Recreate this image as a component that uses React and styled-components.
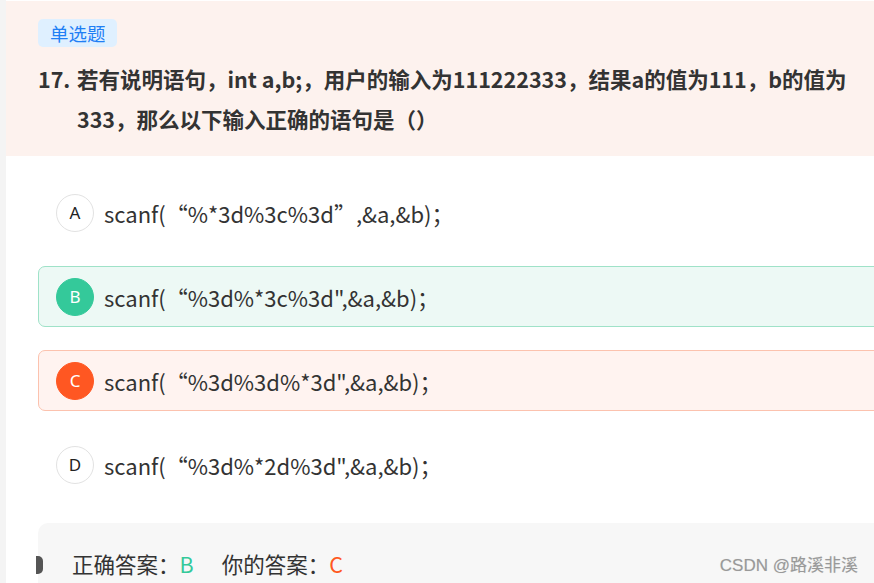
import React from 'react';
import styled, { createGlobalStyle } from 'styled-components';

const GlobalStyle = createGlobalStyle`
  html, body {
    margin: 0;
    padding: 0;
    background: #f4f4f4;
    overflow: hidden;
  }
  body {
    font-family: "Noto Sans CJK SC", "Noto Sans", sans-serif;
    color: #333;
  }
`;

const options = [
  { key: 'A', fmt: '%*3d%3c%3d”', rest: ',&a,&b)；', state: 'plain' },
  { key: 'B', fmt: '%3d%*3c%3d"', rest: ',&a,&b)；', state: 'right' },
  { key: 'C', fmt: '%3d%3d%*3d"', rest: ',&a,&b)；', state: 'wrong' },
  { key: 'D', fmt: '%3d%*2d%3d"', rest: ',&a,&b)；', state: 'plain' },
];

const palette = {
  plain: { bg: 'transparent', border: 'transparent', dot: '#fff', dotBorder: '#e2e2e2', dotText: '#222' },
  right: { bg: '#edf9f5', border: '#9fe2c8', dot: '#34c99a', dotBorder: '#34c99a', dotText: '#fff' },
  wrong: { bg: '#fff3f0', border: '#fcc2ae', dot: '#ff5722', dotBorder: '#ff5722', dotText: '#fff' },
};

const App = () => (
  <>
    <GlobalStyle />
    <Page>
      <Card>
        <Header>
          <Tag>单选题</Tag>
          <Question>
            <Num>17.</Num>
            <QText>若有说明语句，int a,b;，用户的输入为111222333，结果a的值为111，b的值为333，那么以下输入正确的语句是（）</QText>
          </Question>
        </Header>
        <Options>
          {options.map((o) => (
            <Option key={o.key} $state={o.state}>
              <Dot $state={o.state}>{o.key}</Dot>
              <OptText>
                scanf(<Quote>“</Quote>
                {o.fmt}
                {o.rest}
              </OptText>
            </Option>
          ))}
        </Options>
        <Answer>
          <Marker />
          <AnswerLine>
            <span>正确答案：</span>
            <Letter $color="#34c99a">B</Letter>
            <Gap />
            <span>你的答案：</span>
            <Letter $color="#ff5722">C</Letter>
          </AnswerLine>
        </Answer>
      </Card>
      <Watermark>CSDN @路溪非溪</Watermark>
    </Page>
  </>
);

export default App;

const Page = styled.div`
  position: relative;
  height: 583px;
  overflow: hidden;
  padding-left: 6px;
`;

const Card = styled.div`
  width: 900px;
  height: 100%;
  background: #fff;
  padding-top: 1px;
  box-sizing: border-box;
`;

const Header = styled.div`
  background: #fdf2ee;
  padding: 18px 0 17px 32px;
`;

const Tag = styled.span`
  display: inline-block;
  height: 28px;
  line-height: 28px;
  padding: 0 11px 0 12px;
  border-radius: 5px;
  background: #dff0ff;
  color: #1f7ff5;
  font-size: 18.5px;
`;

const Question = styled.div`
  display: flex;
  margin-top: 12px;
  font-size: 21.5px;
  font-weight: 700;
  line-height: 40px;
  color: #333;
`;

const Num = styled.span`
  flex: 0 0 39px;
`;

const QText = styled.span`
  width: 790px;
`;

const Options = styled.div`
  padding: 26px 0 0 32px;
  display: flex;
  flex-direction: column;
  gap: 23px;
`;

const Option = styled.div`
  display: flex;
  align-items: center;
  gap: 10px;
  height: 61px;
  box-sizing: border-box;
  padding-left: 17px;
  border: 1px solid ${(p) => palette[p.$state].border};
  border-radius: 7px;
  background: ${(p) => palette[p.$state].bg};
`;

const Dot = styled.span`
  width: 38px;
  height: 38px;
  box-sizing: border-box;
  border-radius: 50%;
  border: 1px solid ${(p) => palette[p.$state].dotBorder};
  background: ${(p) => palette[p.$state].dot};
  color: ${(p) => palette[p.$state].dotText};
  display: flex;
  align-items: center;
  justify-content: center;
  font-size: 17px;
  font-family: "Noto Sans", sans-serif;
`;

const OptText = styled.span`
  font-size: 22px;
  color: #333;
`;

const Quote = styled.span`
  margin-left: 11px;
`;

const Answer = styled.div`
  position: relative;
  margin: 28px 0 0 32px;
  height: 100px;
  border-radius: 10px;
  background: #f7f7f7;
  padding: 25px 0 0 34px;
  box-sizing: border-box;
`;

const Marker = styled.span`
  position: absolute;
  left: -2px;
  top: 33px;
  width: 7px;
  height: 18px;
  border-radius: 0 5px 5px 0;
  background: #555;
`;

const AnswerLine = styled.div`
  display: flex;
  align-items: center;
  font-size: 21.5px;
  line-height: 32px;
  color: #333;
`;

const Letter = styled.span`
  color: ${(p) => p.$color};
`;

const Gap = styled.span`
  width: 28px;
`;

const Watermark = styled.div`
  position: absolute;
  right: 16px;
  bottom: 7px;
  font-family: "Liberation Sans", "Noto Sans CJK SC", sans-serif;
  font-size: 17px;
  color: #999;
  text-shadow: 0 0 1px rgba(0, 0, 0, 0.15);
`;
